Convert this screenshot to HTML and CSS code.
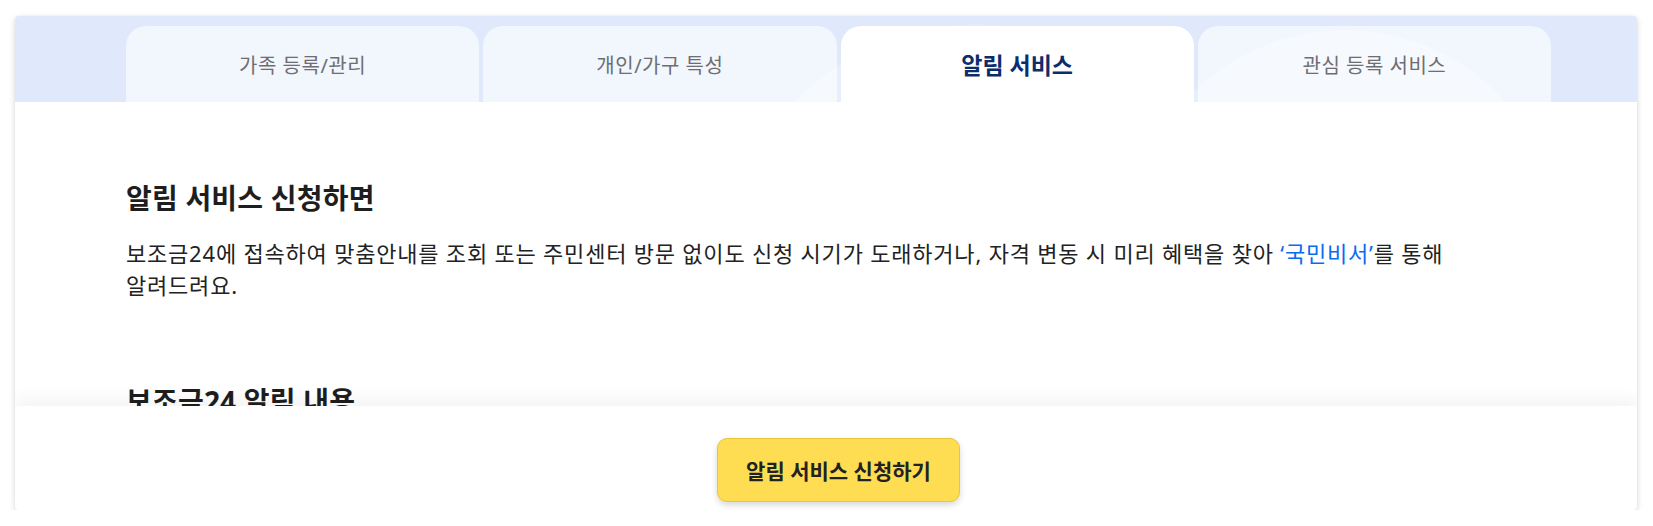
FILE: index.html
```html
<!DOCTYPE html>
<html lang="ko">
<head>
<meta charset="utf-8">
<title>알림 서비스</title>
<link rel="stylesheet" href="styles.css">
</head>
<body>
<div class="card">
  <div class="tabbar">
    <div class="tab">가족 등록/관리</div>
    <div class="tab">개인/가구 특성</div>
    <div class="tab active">알림 서비스</div>
    <div class="tab">관심 등록 서비스</div>
  </div>
  <div class="content">
    <h2 class="title">알림 서비스 신청하면</h2>
    <p class="desc">보조금24에 접속하여 맞춤안내를 조회 또는 주민센터 방문 없이도 신청 시기가 도래하거나, 자격 변동 시 미리 혜택을 찾아 <span class="link">‘국민비서’</span>를 통해 알려드려요.</p>
    <h2 class="title title-second">보조금24 알림 내용</h2>
  </div>
  <div class="footer">
    <button class="apply-btn" type="button">알림 서비스 신청하기</button>
  </div>
</div>
</body>
</html>
```
FILE: styles.css
```css
* { box-sizing: border-box; }
html, body { margin: 0; padding: 0; background: #ffffff; }
body {
  font-family: "Noto Sans", "Noto Sans CJK KR", sans-serif;
  color: #222;
}
.card {
  margin: 16px 16px 0 15px;
  height: 494px;
  display: flex;
  flex-direction: column;
  overflow: hidden;
  border-radius: 4px;
  background: #fff;
  box-shadow: 0 2px 6px rgba(0, 0, 0, 0.16), 0 0 2px rgba(0, 0, 0, 0.06);
}
.tabbar {
  height: 86px;
  flex: none;
  padding: 10px 86px 0 111px;
  display: grid;
  grid-template-columns: repeat(4, 1fr);
  gap: 4px;
  background:
    radial-gradient(circle at 960px 260px, rgba(255,255,255,0.28) 0 250px, rgba(255,255,255,0) 252px),
    radial-gradient(circle at 1330px 230px, rgba(255,255,255,0.28) 0 215px, rgba(255,255,255,0) 217px),
    #dfe9fb;
}
.tab {
  display: flex;
  align-items: center;
  justify-content: center;
  border-radius: 20px 20px 0 0;
  background: rgba(255, 255, 255, 0.6);
  color: #6e6e72;
  font-size: 20px;
  letter-spacing: 0.5px;
}
.tab.active {
  background: #fff;
  color: #0c2d6b;
  font-weight: 700;
  font-size: 23px;
  letter-spacing: 0;
}
.content {
  flex: 1;
  overflow: hidden;
  padding: 77px 86px 0 111px;
}
.title {
  margin: 0;
  font-size: 28px;
  line-height: 39px;
  font-weight: 700;
  color: #1e1e1e;
  letter-spacing: 0.2px;
}
.title-second { margin-top: 81px; }
.desc {
  margin: 19px 0 0;
  max-width: 1345px;
  font-size: 22px;
  line-height: 32px;
  letter-spacing: 0.8px;
  color: #222;
  word-break: keep-all;
}
.link { color: #0b6bf0; }
.footer {
  position: relative;
  height: 104px;
  flex: none;
  padding: 32px 86px 0 111px;
  display: flex;
  justify-content: center;
  align-items: flex-start;
  background: #fff;
  box-shadow: 0 -8px 14px rgba(0, 0, 0, 0.045);
}
.apply-btn {
  width: 243px;
  height: 64px;
  border: 1px solid #eac43c;
  border-radius: 10px;
  background: #ffdd52;
  color: #222;
  font-family: inherit;
  font-size: 21px;
  font-weight: 700;
  box-shadow: 0 3px 6px rgba(0, 0, 0, 0.16);
  cursor: pointer;
}
```
